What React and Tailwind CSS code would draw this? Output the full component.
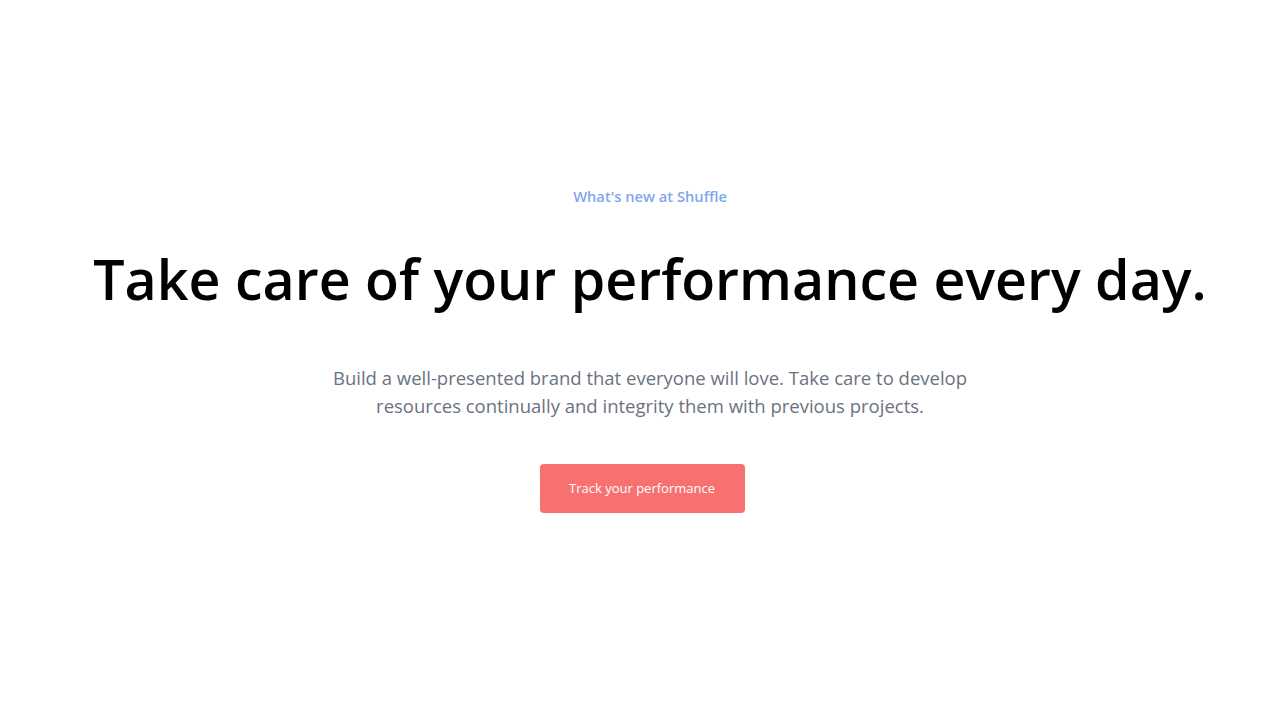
export default function App() {
  return (
    <div className="min-h-screen bg-white flex flex-col items-center pt-[185px] text-center" style={{ fontFamily: '"Open Sans", sans-serif' }}>
      <div className="flex flex-col items-center pl-[20px]">
        <span className="text-[14.7px] font-semibold text-[#7fa8ec] leading-[22px]">What's new at Shuffle</span>
        <h1 className="mt-[36px] text-[55.5px] leading-[72px] font-semibold text-black">
          Take care of your performance every day.
        </h1>
        <p className="mt-[49px] max-w-[680px] text-[18.5px] leading-[28px] text-[#6b7280]">
          Build a well-presented brand that everyone will love. Take care to develop resources continually and integrity them with previous projects.
        </p>
      </div>
      <button className="mt-[44px] ml-[4px] w-[205px] h-[49px] rounded bg-[#f87171] text-white text-[13px]">
        Track your performance
      </button>
    </div>
  );
}
